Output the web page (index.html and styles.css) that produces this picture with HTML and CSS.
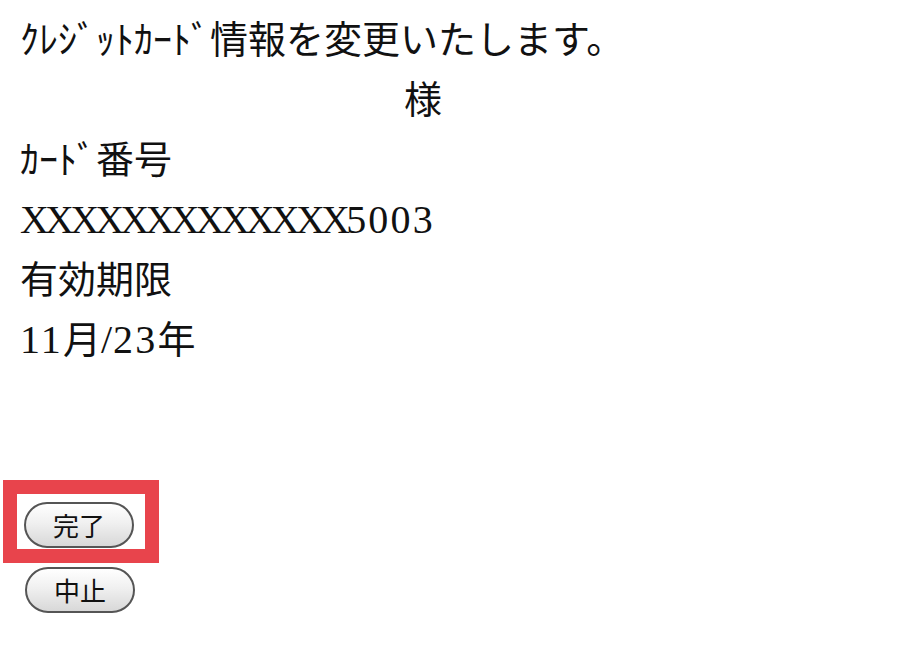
FILE: index.html
```html
<!DOCTYPE html>
<html lang="ja">
<head>
<meta charset="utf-8">
<title>クレジットカード情報変更</title>
<link rel="stylesheet" href="styles.css">
</head>
<body>
<div class="page">
  <p class="line">ｸﾚｼﾞｯﾄｶｰﾄﾞ情報を変更いたします。</p>
  <p class="line name">様</p>
  <p class="line">ｶｰﾄﾞ番号</p>
  <p class="line"><span class="mask">XXXXXXXXXXXXX</span><span class="num">5003</span></p>
  <p class="line">有効期限</p>
  <p class="line"><span class="num">11</span>月<span class="slash">/</span><span class="num">23</span>年</p>
  <div class="actions">
    <div class="highlight">
      <button class="btn" type="button">完了</button>
    </div>
    <button class="btn btn-cancel" type="button">中止</button>
  </div>
</div>
</body>
</html>
```

FILE: styles.css
```css
html, body {
  margin: 0;
  padding: 0;
  background: #ffffff;
}

.page {
  padding: 10px 0 0 20px;
  font-family: "Liberation Serif", "Noto Sans CJK JP", serif;
  color: #111111;
}

.line {
  margin: 0;
  height: 60px;
  font-size: 38px;
  line-height: 60px;
  white-space: nowrap;
}

.name {
  width: 806px;
  text-align: center;
}

.mask {
  font-size: 40px;
  letter-spacing: -3.8px;
}

.num {
  font-size: 40px;
  letter-spacing: 2.2px;
}

.slash {
  font-size: 40px;
  letter-spacing: 1px;
}

.actions {
  margin-top: 110px;
  margin-left: -17px;
  display: flex;
  flex-direction: column;
  align-items: flex-start;
}

.highlight {
  border: 14px solid #e8444c;
  padding: 8px 11px 1px 7px;
}

.btn {
  display: block;
  width: 110px;
  height: 46px;
  margin: 0;
  padding: 0;
  border: 2px solid #555555;
  border-radius: 23px;
  background: linear-gradient(#ffffff, #f0f0f0 45%, #d8d8d8);
  font-family: "Noto Sans CJK JP", sans-serif;
  font-size: 26px;
  line-height: 1;
  color: #111111;
}

.btn-cancel {
  margin-top: 4px;
  margin-left: 22px;
}
```
